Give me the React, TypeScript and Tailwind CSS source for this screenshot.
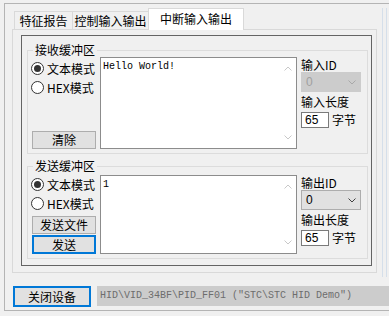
import React from 'react';

const Chevron: React.FC<{ up?: boolean; color: string }> = ({ up, color }) => (
  <svg width="8" height="5" viewBox="0 0 8 5" fill="none">
    <path d={up ? 'M0.5 4.5L4 1L7.5 4.5' : 'M0.5 0.5L4 4L7.5 0.5'} stroke={color} strokeWidth="1" />
  </svg>
);

const Radio: React.FC<{ label: string; checked?: boolean }> = ({ label, checked }) => (
  <div className="flex items-center h-[19px]">
    <span className="flex items-center justify-center w-[13px] h-[13px] rounded-full border border-[#333333] bg-white">
      {checked && <span className="w-[7px] h-[7px] rounded-full bg-[#333333]" />}
    </span>
    <span className="ml-[3px]">{label}</span>
  </div>
);

const Button: React.FC<{ label: string; primary?: boolean; className?: string }> = ({ label, primary, className }) => (
  <div
    className={`flex items-center justify-center bg-[#e1e1e1] ${
      primary ? 'border-2 border-[#0078d7]' : 'border border-[#adadad]'
    } ${className ?? ''}`}
  >
    {label}
  </div>
);

const TextBox: React.FC<{ text: string; height: string }> = ({ text, height }) => (
  <div className={`flex ml-[4px] w-[197px] ${height} border border-[#8c8c8c] bg-white`}>
    <div className="flex-1 pl-[2px] pt-[3px] font-['Liberation_Mono',monospace] text-[10px] leading-[12px]">{text}</div>
    <div className="w-[17px] flex flex-col items-center justify-between pt-[8px] pb-[8px]">
      <Chevron up color="#c8c8c8" />
      <Chevron color="#c8c8c8" />
    </div>
  </div>
);

const SidePanel: React.FC<{ idLabel: string; lenLabel: string; disabled?: boolean }> = ({ idLabel, lenLabel, disabled }) => (
  <div className="ml-[4px] w-[62px] flex flex-col">
    <div className="h-[15px] leading-[15px]">{idLabel}</div>
    <div
      className={`h-[20px] w-[60px] flex items-center justify-between pl-[4px] pr-[4px] border ${
        disabled ? 'bg-[#cccccc] border-[#cccccc] text-[#a0a0a0]' : 'bg-[#e1e1e1] border-[#adadad] text-black'
      }`}
    >
      <span className="font-['Liberation_Sans',sans-serif]">0</span>
      <Chevron color={disabled ? '#a8a8a8' : '#404040'} />
    </div>
    <div className="mt-[2px] h-[15px] leading-[15px]">{lenLabel}</div>
    <div className="mt-[3px] flex items-center h-[16px]">
      <div className="w-[28px] h-[16px] border border-[#7a7a7a] bg-white pl-[3px] flex items-center font-['Liberation_Sans',sans-serif]">
        65
      </div>
      <span className="ml-[3px]">字节</span>
    </div>
  </div>
);

export default function App() {
  return (
    <div className="w-[389px] h-[316px] overflow-hidden bg-[#f0f0f0] pt-[3px] pl-[4px] font-['Noto_Sans_CJK_SC',sans-serif] text-[12px] leading-[14px] text-black">
      <div className="w-[386px] h-[308px] border-l border-t border-b border-[#b4b4b4] flex flex-col">
        {/* top area: tab control + side strip */}
        <div className="flex mt-[4px]">
          <div className="ml-[7px] w-[365px] flex flex-col">
            {/* tabs */}
            <div className="h-[21px] flex items-end pl-[2px]">
              <div className="w-[59px] h-[18px] border border-b-0 border-[#d9d9d9] flex items-center justify-center">特征报告</div>
              <div className="-ml-px w-[77px] h-[18px] border border-b-0 border-[#d9d9d9] flex items-center justify-center">控制输入输出</div>
              <div className="relative z-10 -ml-px -mb-px w-[96px] h-[22px] border border-b-0 border-[#d9d9d9] bg-white flex items-center justify-center pb-[2px]">
                中断输入输出
              </div>
            </div>
            {/* panel */}
            <div className="h-[244px] border border-[#d9d9d9] pt-[5px] pl-[8px]">
              <div className="w-[351px] h-[231px] border border-[#646464] pt-[7px] pl-[5px]">
                {/* receive group */}
                <fieldset className="w-[341px] border border-[#dcdcdc] pb-[4px]">
                  <legend className="ml-[5px] px-[2px] leading-[14px]">接收缓冲区</legend>
                  <div className="flex">
                    <div className="ml-[3px] w-[65px] h-[92px] flex flex-col pt-[2px]">
                      <Radio label="文本模式" checked />
                      <Radio label="HEX模式" />
                      <Button label="清除" className="mt-auto ml-[1px] w-[64px] h-[18px]" />
                    </div>
                    <TextBox text="Hello World!" height="h-[92px]" />
                    <SidePanel idLabel="输入ID" lenLabel="输入长度" disabled />
                  </div>
                </fieldset>
                {/* send group */}
                <fieldset className="mt-[5px] w-[341px] border border-[#dcdcdc] pb-[4px]">
                  <legend className="ml-[5px] px-[2px] leading-[14px]">发送缓冲区</legend>
                  <div className="flex mt-[2px]">
                    <div className="ml-[3px] w-[65px] h-[79px] flex flex-col">
                      <Radio label="文本模式" checked />
                      <Radio label="HEX模式" />
                      <div className="mt-auto flex flex-col">
                        <Button label="发送文件" className="ml-[1px] w-[64px] h-[18px]" />
                        <Button label="发送" primary className="mt-[1px] ml-[1px] w-[64px] h-[19px]" />
                      </div>
                    </div>
                    <TextBox text="1" height="h-[79px]" />
                    <SidePanel idLabel="输出ID" lenLabel="输出长度" />
                  </div>
                </fieldset>
              </div>
            </div>
          </div>
          <div className="ml-[5px] w-[5px] h-[269px] border-l border-r border-[#d5dfea]" />
        </div>
        {/* bottom row */}
        <div className="flex mt-[9px] ml-[8px] items-start">
          <Button label="关闭设备" primary className="w-[78px] h-[21px]" />
          <div className="ml-[6px] flex-1 h-[20px] bg-[#cccccc] flex items-center pl-[3px] font-['Liberation_Mono',monospace] text-[10px] text-[#6d6d6d] whitespace-nowrap overflow-hidden">
            HID\VID_34BF\PID_FF01 ("STC\STC HID Demo")
          </div>
        </div>
      </div>
    </div>
  );
}
